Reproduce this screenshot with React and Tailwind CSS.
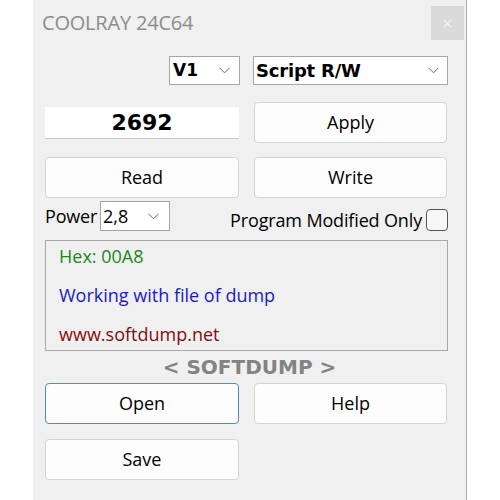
import React from "react";

const font = { fontFamily: '"Open Sans", "Noto Sans", sans-serif' };
const boldFont = { fontFamily: '"DejaVu Sans", Verdana, sans-serif' };

function Chevron() {
  return (
    <svg width="11" height="7" viewBox="0 0 11 7" className="shrink-0">
      <polyline points="0.5,0.8 5.5,5.8 10.5,0.8" fill="none" stroke="#6b6b6b" strokeWidth="1" />
    </svg>
  );
}

function Btn({ children, focused }) {
  return (
    <div
      className={
        "h-[41px] flex items-center justify-center rounded-[4px] bg-[#fdfdfd] text-[18px] text-black border " +
        (focused ? "border-[#4a8cc7]" : "border-[#d4d4d4]")
      }
    >
      {children}
    </div>
  );
}

export default function App() {
  return (
    <div className="w-[500px] h-[500px] bg-white flex" style={font}>
      <div className="ml-[33px] w-[434px] h-[500px] bg-[#f0f0f0] border-r border-[#a9a9a9] flex flex-col">
        {/* title bar */}
        <div className="h-[45px] flex items-start justify-between">
          <div className="pl-[9px] pt-[8px] text-[20px] text-[#8c8c8c] tracking-[-0.2px]">COOLRAY 24C64</div>
          <div className="mt-[6px] mr-[2px] w-[33px] h-[34px] bg-[#dadada] flex items-center justify-center text-[#f2f2f2] text-[18px]">
            ×
          </div>
        </div>

        <div className="pl-[12px] pr-[18px] flex flex-col">
          {/* selects row */}
          <div className="mt-[11px] h-[29px] flex justify-end gap-[13px]">
            <div className="w-[71px] h-[29px] bg-white border border-[#a6a6a6] flex items-center justify-between pl-[3px] pr-[9px]">
              <span className="font-bold text-[17px]" style={boldFont}>V1</span>
              <Chevron />
            </div>
            <div className="w-[195px] h-[29px] bg-white border border-[#a6a6a6] flex items-center justify-between pl-[2px] pr-[8px]">
              <span className="font-bold text-[18px] tracking-[-0.2px]" style={boldFont}>Script R/W</span>
              <Chevron />
            </div>
          </div>

          {/* 2692 / Apply */}
          <div className="mt-[17px] grid grid-cols-[194px_193px] gap-x-[15px] items-center">
            <div className="h-[32px] bg-white border-b border-[#c8c8c8] flex items-center justify-center font-bold text-[22px]" style={boldFont}>
              2692
            </div>
            <Btn>Apply</Btn>
          </div>

          {/* Read / Write */}
          <div className="mt-[14px] grid grid-cols-[194px_193px] gap-x-[15px]">
            <Btn>Read</Btn>
            <Btn>Write</Btn>
          </div>

          {/* Power row */}
          <div className="mt-[3px] h-[30px] flex items-center">
            <span className="text-[18px] tracking-[-0.2px]">Power</span>
            <div className="ml-[3px] w-[70px] h-[30px] bg-white border border-[#a6a6a6] flex items-center justify-between pl-[2px] pr-[10px]">
              <span className="text-[18px]">2,8</span>
              <Chevron />
            </div>
            <span className="ml-auto mt-[8px] text-[18px] tracking-[-0.15px]">Program Modified Only</span>
            <div className="ml-[4px] mt-[8px] w-[22px] h-[22px] rounded-[4px] border-[1.5px] border-[#555555] bg-[#f7f7f7]" />
          </div>

          {/* info box */}
          <div className="mt-[9px] h-[111px] border border-[#a8a8a8] flex flex-col pl-[13px] text-[18px]">
            <div className="mt-[2px] text-[#1e861e]">Hex: 00A8</div>
            <div className="mt-[12px] text-[#1a1ac8]">Working with file of dump</div>
            <div className="mt-[12px] text-[#860c0c]">www.softdump.net</div>
          </div>
        </div>

        <div className="h-[32px] flex items-center justify-center font-bold text-[20px] text-[#838383]" style={boldFont}>
          &lt; SOFTDUMP &gt;
        </div>

        <div className="pl-[12px] pr-[18px] flex flex-col">
          <div className="grid grid-cols-[194px_193px] gap-x-[15px]">
            <Btn focused>Open</Btn>
            <Btn>Help</Btn>
          </div>
          <div className="mt-[15px] grid grid-cols-[194px_193px] gap-x-[15px]">
            <Btn>Save</Btn>
          </div>
        </div>
      </div>
    </div>
  );
}
